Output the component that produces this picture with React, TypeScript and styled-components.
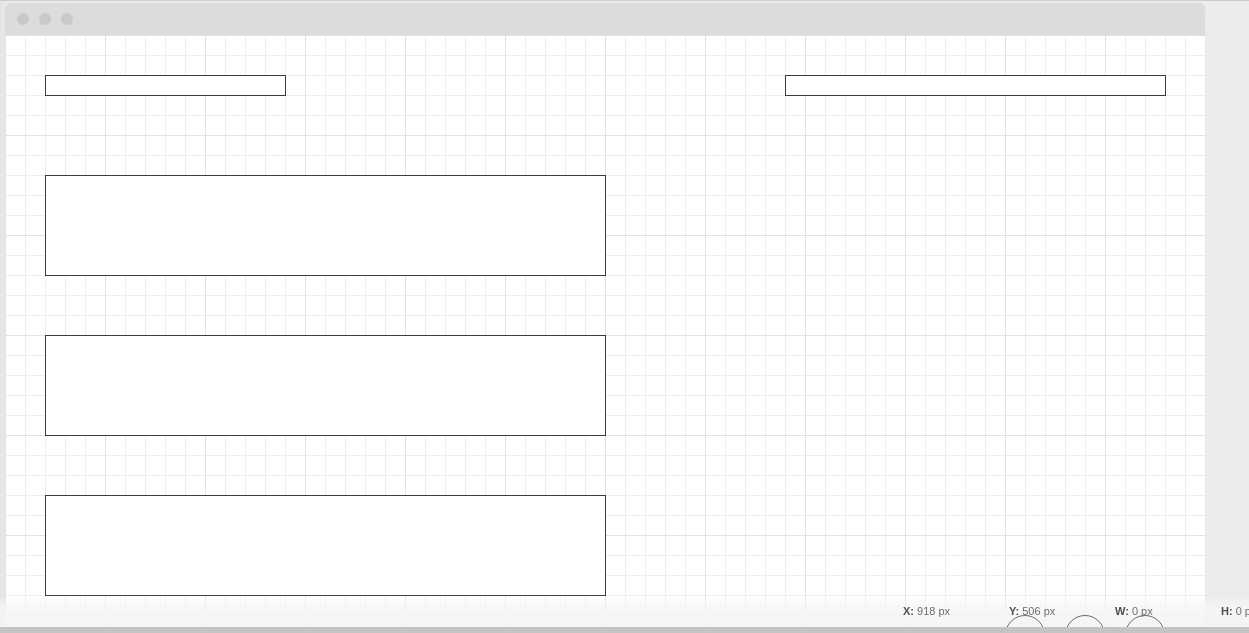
import React from 'react';
import styled, { createGlobalStyle } from 'styled-components';

const GlobalStyle = createGlobalStyle`
    html, body {
        margin: 0;
        padding: 0;
        background: #ececec;
        overflow: hidden;
        font-family: "Liberation Sans", Arial, sans-serif;
    }
`;

const Page = styled.div`
    height: 100vh;
    box-sizing: border-box;
    border-top: 1px solid #cdcdcd;
    padding: 2px 0 0 5px;
    display: flex;
    background: linear-gradient(to right, #e4e4e4 0, #e9e9e9 5px, #ececec 5px);
`;

const Window = styled.div`
    width: 1200px;
    display: flex;
    flex-direction: column;
    border-radius: 6px 6px 0 0;
    overflow: hidden;
    box-shadow: 0 0 1px rgba(0, 0, 0, 0.18);
`;

const TitleBar = styled.div`
    height: 32px;
    flex: none;
    background: #dcdcdc;
    display: flex;
    align-items: center;
    gap: 10px;
    padding-left: 12px;
`;

const Dot = styled.span`
    width: 12px;
    height: 12px;
    border-radius: 50%;
    background: #c9c9c9;
`;

const Canvas = styled.div`
    flex: 1;
    background-color: #fff;
    background-image:
        linear-gradient(to right, #e2e2e2 1px, transparent 1px),
        linear-gradient(to bottom, #e2e2e2 1px, transparent 1px),
        linear-gradient(to right, #eeeeee 1px, transparent 1px),
        linear-gradient(to bottom, #eeeeee 1px, transparent 1px);
    background-size: 100px 100px, 100px 100px, 20px 20px, 20px 20px;
    padding: 40px;
    display: flex;
    justify-content: space-between;
    align-items: flex-start;
`;

const Column = styled.div`
    display: flex;
    flex-direction: column;
`;

// boxes are drawn with the stroke on both edges, hence the extra pixel
const Field = styled.div<{ $w: number; $end?: boolean }>`
    box-sizing: border-box;
    width: ${p => p.$w}px;
    height: 21px;
    margin-right: ${p => (p.$end ? -1 : 0)}px;
    background: #fff;
    border: 1px solid #3c3c3c;
`;

const Panel = styled.div<{ $top: number }>`
    box-sizing: border-box;
    width: 561px;
    height: 101px;
    margin-top: ${p => p.$top}px;
    background: #fff;
    border: 1px solid #3c3c3c;
`;

const Readout = styled.div`
    position: fixed;
    left: 0;
    right: 0;
    top: 595px;
    bottom: 6px;
    background: linear-gradient(to bottom, rgba(250, 250, 250, 0) 0, rgba(246, 246, 246, 0.85) 40%, rgba(243, 243, 243, 0.9) 100%);
    display: flex;
    padding: 10px 0 0 903px;
    box-sizing: border-box;
    white-space: nowrap;
`;

const Metric = styled.div`
    width: 106px;
    flex: none;
    font-size: 11px;
    line-height: 13px;
    color: #6e6e6e;
    b {
        color: #4f4f4f;
    }
`;

const Handles = styled.div`
    position: absolute;
    left: 1005px;
    top: 20px;
    display: flex;
    gap: 20px;
`;

const Handle = styled.span`
    box-sizing: border-box;
    width: 40px;
    height: 40px;
    border-radius: 50%;
    border: 1px solid #6a6a6a;
`;

const BottomBar = styled.div`
    position: fixed;
    left: 0;
    right: 0;
    bottom: 0;
    height: 6px;
    background: #c4c4c4;
    z-index: 2;
`;

const metrics = [
    { label: 'X:', value: '918 px' },
    { label: 'Y:', value: '506 px' },
    { label: 'W:', value: '0 px' },
    { label: 'H:', value: '0 px' },
];

const App = () => {
    return (
        <>
            <GlobalStyle />
            <Page>
                <Window>
                    <TitleBar>
                        <Dot />
                        <Dot />
                        <Dot />
                    </TitleBar>
                    <Canvas>
                        <Column>
                            <Field $w={241} />
                            <Panel $top={79} />
                            <Panel $top={59} />
                            <Panel $top={59} />
                        </Column>
                        <Field $w={381} $end />
                    </Canvas>
                </Window>
            </Page>
            <Readout>
                {metrics.map(m => (
                    <Metric key={m.label}>
                        <b>{m.label}</b> {m.value}
                    </Metric>
                ))}
                <Handles>
                    <Handle />
                    <Handle />
                    <Handle />
                </Handles>
            </Readout>
            <BottomBar />
        </>
    );
};

export default App;
